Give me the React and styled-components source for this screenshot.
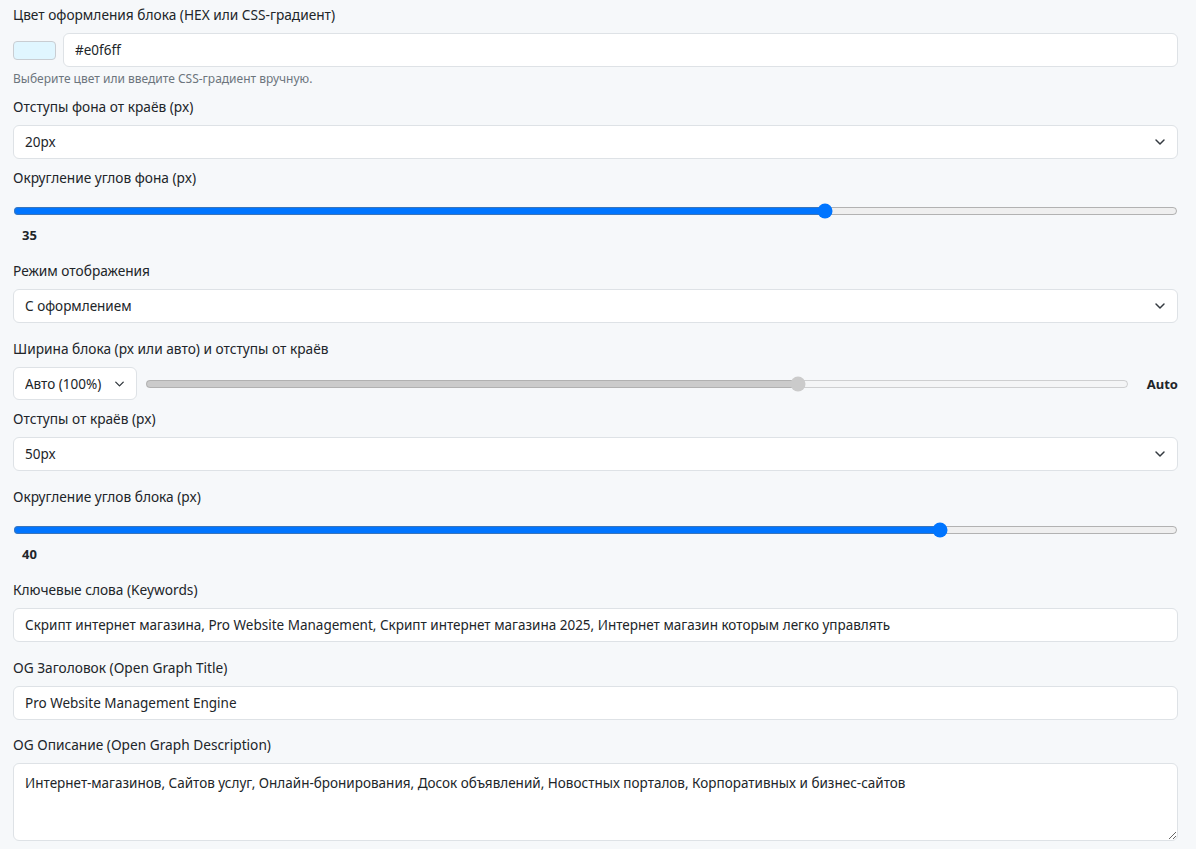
import React from 'react';
import styled, { createGlobalStyle } from 'styled-components';
import { ChevronDown } from 'lucide-react';

const GlobalStyle = createGlobalStyle`
  html, body {
    margin: 0;
    background: #f6f8fa;
  }
  body {
    font-family: "Noto Sans", "Open Sans", sans-serif;
    color: #212529;
  }
`;

const Page = styled.div`
  padding: 5px 18px 0 13px;
`;

const Group = styled.div`
  margin-bottom: ${(p) => p.$mb ?? 16}px;
`;

const Label = styled.label`
  display: block;
  font-size: 13.7px;
  line-height: 20px;
  margin-bottom: 8px;
  color: #212529;
`;

const Row = styled.div`
  display: flex;
  align-items: center;
  gap: ${(p) => p.$gap || 7}px;
`;

const Swatch = styled.span`
  flex: none;
  width: 41px;
  height: 17px;
  border: 1px solid #c9cdd2;
  border-radius: 4px;
  background: ${(p) => p.$color};
`;

const TextInput = styled.input`
  flex: 1;
  width: 100%;
  box-sizing: border-box;
  height: 34px;
  padding: 0 11px;
  border: 1px solid #dee2e6;
  border-radius: 6px;
  background: #fff;
  font: inherit;
  font-size: 13.5px;
  color: #212529;
  outline: none;
`;

const Help = styled.div`
  margin-top: 4px;
  font-size: 12px;
  line-height: 16px;
  color: #6c757d;
`;

const SelectWrap = styled.div`
  position: relative;
  width: ${(p) => (p.$width ? `${p.$width}px` : '100%')};
  flex: none;
`;

const Select = styled.select`
  appearance: none;
  -webkit-appearance: none;
  display: block;
  width: 100%;
  box-sizing: border-box;
  height: ${(p) => p.$h || 34}px;
  padding: 0 ${(p) => p.$pr || 36}px 0 11px;
  border: 1px solid #dee2e6;
  border-radius: 6px;
  background: #fff;
  font: inherit;
  font-size: 13.5px;
  color: #212529;
  outline: none;
`;

const Chevron = styled(ChevronDown)`
  position: absolute;
  right: 10px;
  top: 50%;
  transform: translateY(-50%);
  pointer-events: none;
  color: #343a40;
`;

const SliderBox = styled.div`
  height: 30px;
  display: flex;
  align-items: center;
  flex: ${(p) => (p.$grow ? 1 : 'initial')};
`;

const Range = styled.input`
  width: 100%;
  margin: 0;
`;

const Value = styled.div`
  margin-top: -1px;
  padding-left: 9px;
  font-size: 13px;
  line-height: 20px;
  font-weight: 700;
`;

const AutoLabel = styled.span`
  flex: none;
  margin-left: 10px;
  font-size: 13px;
  font-weight: 700;
`;

const TextArea = styled.textarea`
  display: block;
  width: 100%;
  box-sizing: border-box;
  height: 78px;
  padding: 9px 11px;
  border: 1px solid #dee2e6;
  border-radius: 6px;
  background: #fff;
  font: inherit;
  font-size: 13.5px;
  line-height: 20px;
  color: #212529;
  outline: none;
`;

const SelectField = ({ value, options, width }) => (
  <SelectWrap $width={width}>
    <Select defaultValue={value} $h={width ? 33 : 34} $pr={width ? 20 : 36}>
      {options.map((o) => (
        <option key={o}>{o}</option>
      ))}
    </Select>
    <Chevron size={width ? 15 : 16} strokeWidth={2.2} />
  </SelectWrap>
);

const SliderField = ({ label, value }) => (
  <Group>
    <Label>{label}</Label>
    <SliderBox>
      <Range type="range" min={0} max={50} defaultValue={value} />
    </SliderBox>
    <Value>{value}</Value>
  </Group>
);

const App = () => {
  return (
    <Page>
      <GlobalStyle />
      <Group $mb={10}>
        <Label>Цвет оформления блока (HEX или CSS-градиент)</Label>
        <Row>
          <Swatch $color="#e0f6ff" />
          <TextInput defaultValue="#e0f6ff" />
        </Row>
        <Help>Выберите цвет или введите CSS-градиент вручную.</Help>
      </Group>

      <Group $mb={9}>
        <Label>Отступы фона от краёв (px)</Label>
        <SelectField value="20px" options={['0px', '10px', '20px', '30px', '40px', '50px']} />
      </Group>

      <SliderField label="Округление углов фона (px)" value={35} />

      <Group>
        <Label>Режим отображения</Label>
        <SelectField value="С оформлением" options={['С оформлением', 'Без оформления']} />
      </Group>

      <Group $mb={9}>
        <Label>Ширина блока (px или авто) и отступы от краёв</Label>
        <Row $gap={8}>
          <SelectField width={124} value="Авто (100%)" options={['Авто (100%)', 'Фиксированная']} />
          <SliderBox $grow>
            <Range type="range" min={300} max={1200} defaultValue={900} disabled />
          </SliderBox>
          <AutoLabel>Auto</AutoLabel>
        </Row>
      </Group>

      <Group>
        <Label>Отступы от краёв (px)</Label>
        <SelectField value="50px" options={['0px', '20px', '50px', '100px']} />
      </Group>

      <SliderField label="Округление углов блока (px)" value={40} />

      <Group>
        <Label>Ключевые слова (Keywords)</Label>
        <TextInput defaultValue="Скрипт интернет магазина, Pro Website Management, Скрипт интернет магазина 2025, Интернет магазин которым легко управлять" />
      </Group>

      <Group $mb={15}>
        <Label>OG Заголовок (Open Graph Title)</Label>
        <TextInput defaultValue="Pro Website Management Engine" />
      </Group>

      <Group>
        <Label>OG Описание (Open Graph Description)</Label>
        <TextArea defaultValue="Интернет-магазинов, Сайтов услуг, Онлайн-бронирования, Досок объявлений, Новостных порталов, Корпоративных и бизнес-сайтов" />
      </Group>
    </Page>
  );
};

export default App;
